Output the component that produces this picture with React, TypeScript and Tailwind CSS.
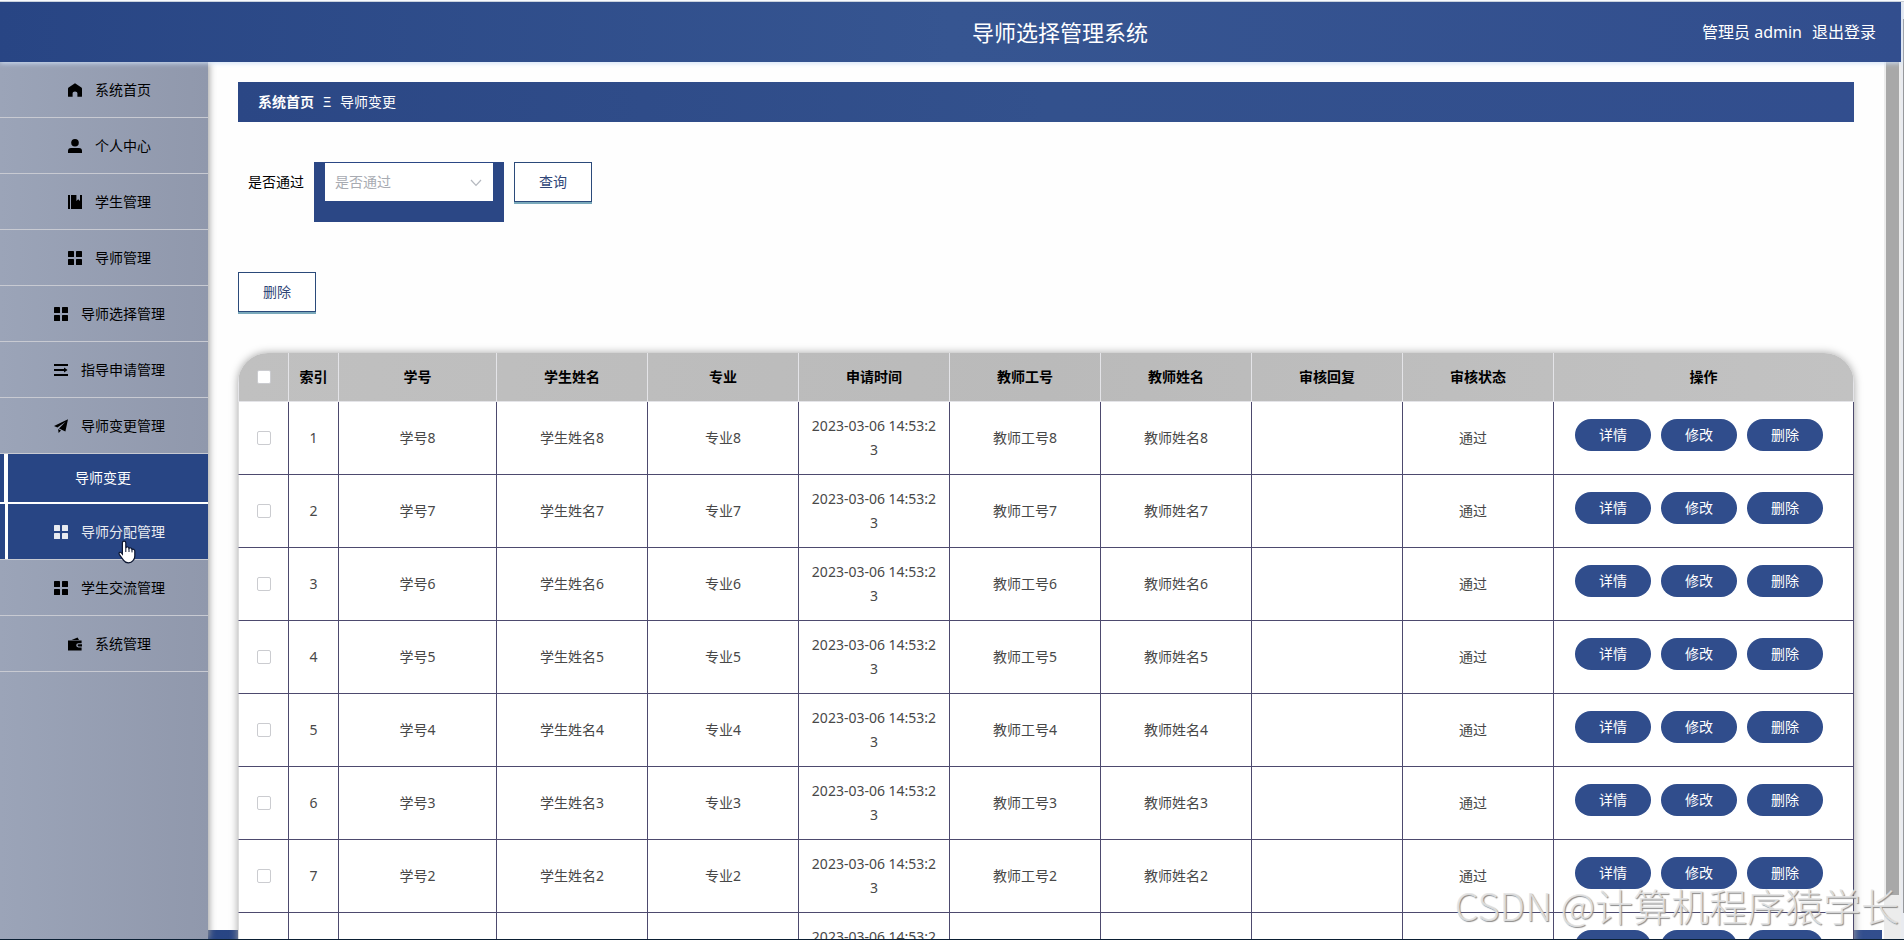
import type { ReactNode } from 'react';

interface MenuItem {
  label: string;
  icon: ReactNode;
  hovered?: boolean;
  children?: string[];
}

const GridIcon = (
  <svg viewBox="0 0 14 14" fill="currentColor" className="h-[14px] w-[14px]">
    <rect x="0" y="0" width="6" height="6" rx="0.6" />
    <rect x="8" y="0" width="6" height="6" rx="0.6" />
    <rect x="0" y="8" width="6" height="6" rx="0.6" />
    <rect x="8" y="8" width="6" height="6" rx="0.6" />
  </svg>
);

const HomeIcon = (
  <svg viewBox="0 0 14 14" fill="currentColor" className="h-[14px] w-[14px]">
    <path d="M7 0.3 13.4 4.6Q14 5 14 5.7V13.2Q14 13.8 13.4 13.8H9.4V10Q9.4 8.4 7 8.4T4.6 10V13.8H0.6Q0 13.8 0 13.2V5.7Q0 5 .6 4.6Z" />
  </svg>
);

const UserIcon = (
  <svg viewBox="0 0 14 14" fill="currentColor" className="h-[14px] w-[14px]">
    <circle cx="7" cy="3.8" r="3.8" />
    <path d="M0 14V12Q0 9 3 9H11Q14 9 14 12V14Z" />
  </svg>
);

const BookIcon = (
  <svg viewBox="0 0 14 14" fill="currentColor" className="h-[14px] w-[14px]">
    <path d="M0 0H2V14H0ZM3 0H8.4V6L10.2 4.2 12 6V0H14V14H3Z" />
  </svg>
);

const UnfoldIcon = (
  <svg viewBox="0 0 14 14" fill="currentColor" className="h-[14px] w-[14px]">
    <path d="M0 1H14V3H0ZM0 6H10V4.4L13.6 7 10 9.6V8H0ZM0 11H14V13H0Z" />
  </svg>
);

const PlaneIcon = (
  <svg viewBox="0 0 14 14" fill="currentColor" className="h-[14px] w-[14px]">
    <path d="M14 0.2 0 7 3.4 8.6 11.6 2.8 5 9.4 11.4 12.4ZM4.1 10 7 11.4 4.6 14Z" />
  </svg>
);

const WalletIcon = (
  <svg viewBox="0 0 14 14" fill="currentColor" className="h-[14px] w-[14px]">
    <path d="M3.6 3 9.6 0.4 11 3Z" />
    <path d="M0 3.4H13.6V6.2H10.4Q8.2 6.3 8.2 8.3T10.4 10.4H13.6V13.4H0Z" />
    <path d="M10.6 7.2H14V9.4H10.6Q9.6 9.3 9.6 8.3T10.6 7.2Z" />
  </svg>
);

const menu: MenuItem[] = [
  { label: '系统首页', icon: HomeIcon },
  { label: '个人中心', icon: UserIcon },
  { label: '学生管理', icon: BookIcon },
  { label: '导师管理', icon: GridIcon },
  { label: '导师选择管理', icon: GridIcon },
  { label: '指导申请管理', icon: UnfoldIcon },
  { label: '导师变更管理', icon: PlaneIcon, children: ['导师变更'] },
  { label: '导师分配管理', icon: GridIcon, hovered: true },
  { label: '学生交流管理', icon: GridIcon },
  { label: '系统管理', icon: WalletIcon },
];

const headers = ['学号', '学生姓名', '专业', '申请时间', '教师工号', '教师姓名', '审核回复', '审核状态', '操作'];
const rows = [8, 7, 6, 5, 4, 3, 2, 1];

export default function App() {
  return (
    <div className="flex h-screen flex-col overflow-hidden border-b border-[#0b1f33] bg-[#e9ebf0] font-['Noto_Sans','Noto_Sans_CJK_SC',sans-serif] text-sm text-black">
      <div className="h-[2px] shrink-0 border-b border-[#c9cdd2] bg-white" />
      <div className="flex min-h-0 flex-1">
        <div className="flex min-w-0 flex-1 flex-col">
          <Header />
          <div className="flex min-h-0 flex-1">
            <Sidebar />
            <Content />
            <div className="w-[17px] shrink-0 bg-[#ececec] pr-[2px] pl-[2px]">
              <div className="h-[95%] bg-[#a8a8a8]" />
            </div>
          </div>
        </div>
        <div className="w-[3px] shrink-0 pt-[17px] pb-[26px] pl-[2px]">
          <div className="h-full bg-[#96989c]" />
        </div>
      </div>
      <div className="pointer-events-none absolute right-[5px] bottom-[7px] z-30 font-['Noto_Sans_CJK_SC',sans-serif] text-[38px] leading-[56px] font-light whitespace-nowrap text-[#e4e4e4]/90 [text-shadow:1px_1px_1px_#8a8a8a]">
        CSDN @计算机程序猿学长
      </div>
    </div>
  );
}

function Header() {
  return (
    <header className="relative z-20 grid h-[60px] shrink-0 grid-cols-[1fr_auto_1fr] items-center bg-linear-to-r from-[#284584] via-[#365591] to-[#324e8e] pr-[25px] pl-[244px] text-white shadow-[0_1px_5px_#cfe0f7]">
      <h1 className="col-start-2 text-[22px] leading-8">导师选择管理系统</h1>
      <div className="flex justify-end gap-[10px] text-base">
        <span>管理员 admin</span>
        <a href="#logout">退出登录</a>
      </div>
    </header>
  );
}

function Sidebar() {
  return (
    <nav className="relative z-10 w-[208px] shrink-0 bg-linear-to-r from-[#9ba4b8] to-[#9098ac] shadow-[1px_0_7px_#999]">
      {menu.map((item) => (
        <div key={item.label}>
          <MenuRow item={item} />
          {item.children?.map((child) => (
            <a key={child} href="#change" className="block h-[50px] border-b-2 border-white bg-[#284584] pl-1 text-white">
              <span className="flex h-full items-center justify-center border-l-4 border-white pr-[10px]">{child}</span>
            </a>
          ))}
        </div>
      ))}
      <svg viewBox="0 0 18 24" className="absolute top-[478px] left-[118px] z-20 h-[24px] w-[18px]">
        <path
          d="M6 1.2Q7.8 1.2 7.8 3V8Q8.4 6.7 9.8 7 11 7.2 11 8.4 12 7.4 13 8 13.9 8.5 14 9.4 15 8.8 16 9.5 16.8 10 16.8 11.2V16Q16.8 19 15 20.6 13.4 22.8 10.4 22.8 7.2 22.8 5.6 20.4L1.4 14.6Q.6 13 1.6 12.4 2.6 12 3.4 12.8L4.4 14V3Q4.4 1.2 6 1.2Z"
          fill="#fff"
          stroke="#0b1530"
          strokeWidth="1.2"
        />
        <path d="M7.8 8V12M11 8.4V12M14 9.4V12.4" stroke="#0b1530" strokeWidth="1" />
      </svg>
    </nav>
  );
}

function MenuRow({ item }: { item: MenuItem }) {
  const tone = item.hovered ? 'bg-[#284584] pl-[5px] text-[#e8eaf0]' : 'text-black';
  const inner = item.hovered ? 'border-l-[3px] border-white pr-[2px]' : 'pl-[6px]';
  return (
    <button className={`block h-[56px] w-full cursor-pointer border-b border-[#c8cad2] ${tone}`}>
      <span className={`flex h-full items-center justify-center gap-2 ${inner}`}>
        <span className="flex w-6 justify-center">{item.icon}</span>
        {item.label}
      </span>
    </button>
  );
}

function Content() {
  return (
    <main className="relative min-w-0 flex-1 overflow-hidden bg-[#fefefe] px-[30px] pt-5">
      <div className="absolute right-[2px] bottom-0 left-0 h-[9px] bg-linear-to-r from-[#284584] to-[#324e8e]" />
      <div className="flex h-10 items-center bg-linear-to-r from-[#2b4785] via-[#33518d] to-[#324e8e] px-5 text-white">
        <a href="#home" className="font-bold">系统首页</a>
        <span className="w-[26px] text-center">Ξ</span>
        <span>导师变更</span>
      </div>

      <div className="mt-10 flex gap-[10px] pl-[10px]">
        <label htmlFor="pass" className="leading-10">是否通过</label>
        <div className="h-[60px] w-[190px] bg-[#2b4785] px-[11px] pt-px">
          <div className="relative">
            <select id="pass" defaultValue="" className="block h-[38px] w-full appearance-none bg-white pl-[10px] text-[#a8abb2] outline-none">
              <option value="">是否通过</option>
              <option value="yes">是</option>
              <option value="no">否</option>
            </select>
            <svg viewBox="0 0 12 8" fill="none" stroke="#b4b8bf" strokeWidth="1.2" className="pointer-events-none absolute top-[16px] right-[11px] h-[8px] w-[12px]">
              <path d="M1 1 6 6.4 11 1" />
            </svg>
          </div>
        </div>
        <OutlineButton>查询</OutlineButton>
      </div>

      <div className="mt-[50px]">
        <OutlineButton>删除</OutlineButton>
      </div>

      <div className="relative mt-[41px] overflow-hidden rounded-t-[30px] bg-white shadow-[0_0_8px_#a4a4a4]">
        <table className="w-full table-fixed border-separate border-spacing-0 text-center">
          <colgroup>
            <col className="w-[51px]" />
            <col className="w-[50px]" />
            <col />
            <col className="w-[151px]" />
            <col className="w-[151px]" />
            <col className="w-[151px]" />
            <col className="w-[151px]" />
            <col className="w-[151px]" />
            <col className="w-[151px]" />
            <col className="w-[151px]" />
            <col className="w-[300px]" />
          </colgroup>
          <thead className="bg-linear-to-r from-[#c0c0c0] via-[#bababa] to-[#c2c2c2]">
            <tr className="h-[49px]">
              <th className="border-r border-b border-l border-[#e4e4e8]">
                <Tick label="全选" />
              </th>
              <th className="border-r border-b border-[#e4e4e8] font-bold">索引</th>
              {headers.map((h) => (
                <th key={h} className="border-r border-b border-[#e4e4e8] font-bold">{h}</th>
              ))}
            </tr>
          </thead>
          <tbody className="text-[#484848]">
            {rows.map((n, i) => (
              <tr key={n} className="h-[73px]">
                <td className="border-r border-b border-l border-[#4d4a6e] border-l-[#dcdcdc]">
                  <Tick label={`选择第${i + 1}行`} />
                </td>
                <Cell>{i + 1}</Cell>
                <Cell>学号{n}</Cell>
                <Cell>学生姓名{n}</Cell>
                <Cell>专业{n}</Cell>
                <Cell>2023-03-06 14:53:23</Cell>
                <Cell>教师工号{n}</Cell>
                <Cell>教师姓名{n}</Cell>
                <Cell />
                <Cell>
                  <span className="mr-[10px]">通过</span>
                </Cell>
                <td className="border-r border-b border-[#4d4a6e] pb-[6px] pl-[21px]">
                  <div className="flex gap-[10px]">
                    <PillButton>详情</PillButton>
                    <PillButton>修改</PillButton>
                    <PillButton>删除</PillButton>
                  </div>
                </td>
              </tr>
            ))}
          </tbody>
        </table>
      </div>
    </main>
  );
}

function Cell({ children }: { children?: ReactNode }) {
  return <td className="border-r border-b border-[#4d4a6e] px-[10px] leading-6 break-all">{children}</td>;
}

function Tick({ label }: { label: string }) {
  return (
    <input
      type="checkbox"
      aria-label={label}
      className="mx-auto block h-[14px] w-[14px] appearance-none rounded-[2px] border border-[#cbccd0] bg-white"
    />
  );
}

function OutlineButton({ children }: { children: ReactNode }) {
  return (
    <button className="block h-10 w-[78px] cursor-pointer border border-[#2b4a7a] bg-white text-[#2f4678] shadow-[0_2px_0_#7aa9bb]">
      {children}
    </button>
  );
}

function PillButton({ children }: { children: ReactNode }) {
  return <button className="h-8 w-[76px] cursor-pointer rounded-[16px] bg-[#304d8c] text-white">{children}</button>;
}
